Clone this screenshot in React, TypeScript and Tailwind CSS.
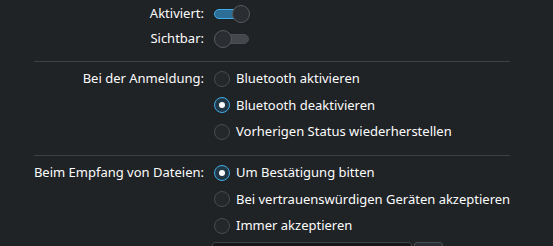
import React from "react";

function Switch({ on }: { on: boolean }) {
  return (
    <div className="relative w-[36px] h-[18px]">
      <div
        className={
          "absolute left-0 right-[1px] top-[4px] h-[10px] rounded-full border " +
          (on ? "bg-[#2c6e96] border-[#3daee9]" : "bg-[#44484c] border-[#4a4e52]")
        }
      />
      <div
        className={
          "absolute top-0 w-[18px] h-[18px] rounded-full bg-[#2a2e32] border border-[#55595d] " +
          (on ? "right-0" : "left-0")
        }
      />
    </div>
  );
}

function Radio({ on, label }: { on: boolean; label: string }) {
  return (
    <div className="flex items-center gap-[6px]">
      <div
        className={
          "w-[16px] h-[16px] rounded-full border flex items-center justify-center " +
          (on ? "border-[#3daee9] bg-[#223847]" : "border-[#484c50] bg-[#25282b]")
        }
      >
        {on && <div className="w-[6px] h-[6px] rounded-full bg-[#fcfcfc]" />}
      </div>
      <span>{label}</span>
    </div>
  );
}

function Row({ label, children, h }: { label?: string; children: React.ReactNode; h: string }) {
  return (
    <div className={"flex items-center " + h}>
      <div className="w-[204px] text-right pr-0 shrink-0">{label}</div>
      <div className="ml-[10px] flex items-center">{children}</div>
    </div>
  );
}

export default function App() {
  return (
    <div
      className="w-[553px] h-[246px] overflow-hidden bg-[#202326] text-[#fcfcfc] text-[13px] leading-none"
      style={{ fontFamily: '"Noto Sans", sans-serif' }}
    >
      <div className="flex flex-col">
        <Row label="Aktiviert:" h="h-[25px] mt-[1px]">
          <Switch on={true} />
        </Row>
        <Row label="Sichtbar:" h="h-[25px]">
          <Switch on={false} />
        </Row>
        <div className="mt-[10px] ml-[34px] w-[476px] h-px bg-[#3c4044]" />
        <div className="mt-[3px]" />
        <Row label="Bei der Anmeldung:" h="h-[27px]">
          <Radio on={false} label="Bluetooth aktivieren" />
        </Row>
        <Row h="h-[26px]">
          <Radio on={true} label="Bluetooth deaktivieren" />
        </Row>
        <Row h="h-[27px]">
          <Radio on={false} label="Vorherigen Status wiederherstellen" />
        </Row>
        <div className="mt-[10px] ml-[34px] w-[476px] h-px bg-[#3c4044]" />
        <div className="mt-[3px]" />
        <Row label="Beim Empfang von Dateien:" h="h-[27px]">
          <Radio on={true} label="Um Bestätigung bitten" />
        </Row>
        <Row h="h-[26px]">
          <Radio on={false} label="Bei vertrauenswürdigen Geräten akzeptieren" />
        </Row>
        <Row h="h-[27px]">
          <Radio on={false} label="Immer akzeptieren" />
        </Row>
        <div className="flex ml-[212px] mt-[3px] gap-[2px]">
          <div className="w-[200px] h-[28px] rounded-[3px] bg-[#141618] border border-[#3e4246]" />
          <div className="w-[29px] h-[28px] rounded-[3px] bg-[#2a2e32] border border-[#4a4e52]" />
        </div>
      </div>
    </div>
  );
}
